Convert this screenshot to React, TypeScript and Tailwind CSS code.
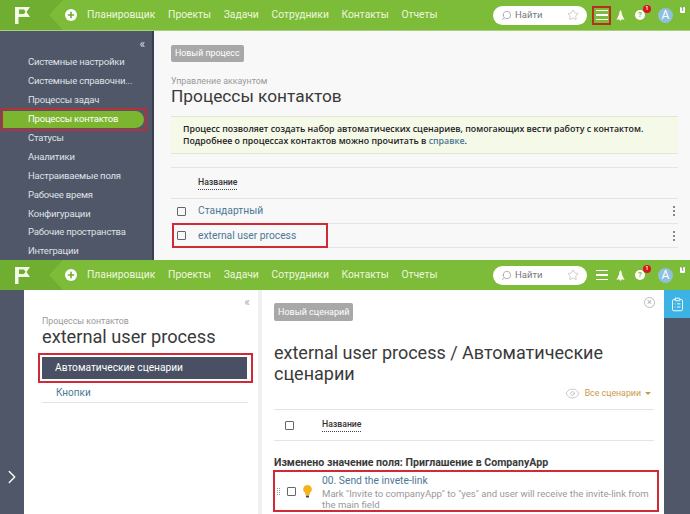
import { ChevronRight, ClipboardList, Eye, Search, Star } from "lucide-react";

const navItems = ["Планировщик", "Проекты", "Задачи", "Сотрудники", "Контакты", "Отчеты"];
const sideItems = [
  "Системные настройки",
  "Системные справочни...",
  "Процессы задач",
  "Процессы контактов",
  "Статусы",
  "Аналитики",
  "Настраиваемые поля",
  "Рабочее время",
  "Конфигурации",
  "Рабочие пространства",
  "Интеграции",
];

function Flag() {
  return (
    <svg width="15" height="17" viewBox="0 0 15 17">
      <path fillRule="evenodd" d="M0 0h15l-3.500 5 3.500 5H3.500v7H0zM4 2.500V7h5l1.500-2.200L9 2.500z" fill="#f4f9ea" />
    </svg>
  );
}

function PlusDisc() {
  return (
    <svg width="12" height="12" viewBox="0 0 12 12">
      <circle cx="6" cy="6" r="6" fill="#fff" />
      <path d="M6 2.800v6.400M2.800 6h6.400" stroke="#6fae31" strokeWidth="1.600" />
    </svg>
  );
}

function Rocket() {
  return (
    <svg width="9" height="11" viewBox="0 0 9 11">
      <path d="M4.500 0c1 1.300 1.400 2.700 1.400 4.300L8.500 10 6 9.200 4.500 11 3 9.200.5 10l2.600-5.700C3.100 2.700 3.500 1.300 4.500 0z" fill="#f4f9ea" />
    </svg>
  );
}

function Header({ marked }: { marked?: boolean }) {
  return (
    <header className="flex h-[30px] shrink-0 items-center bg-[#7cbc38] pr-[17px]">
      <div className="relative flex h-full w-[63px] shrink-0 items-center bg-[#6fae31] pl-[15px]">
        <Flag />
        <div className="absolute right-0 top-0 h-0 w-0 border-y-[15px] border-r-[14px] border-y-transparent border-r-[#7cbc38]" />
      </div>
      <span className="ml-[2px]">
        <PlusDisc />
      </span>
      <nav className="ml-[10px] flex gap-[12.700px] text-[10.300px] text-[#eef7df]">
        {navItems.map((item) => (
          <span key={item}>{item}</span>
        ))}
      </nav>
      <div className="ml-auto flex h-[19px] w-[94px] items-center rounded-full bg-white pl-[8px] pr-[8px] text-[9.500px] text-[#777]">
        <Search size={11} className="-scale-x-100 text-[#aaa]" />
        <span className="ml-[3px]">Найти</span>
        <Star size={12} className="ml-auto text-[#ccc]" />
      </div>
      <div
        className={
          marked
            ? "ml-[5px] flex h-[19px] w-[19px] flex-col items-center justify-center gap-[3px] border-2 border-[#b5301d]"
            : "ml-[5px] flex h-[19px] w-[19px] flex-col items-center justify-center gap-[3px]"
        }
      >
        <span className="h-[1.500px] w-[12px] bg-white" />
        <span className="h-[1.500px] w-[12px] bg-white" />
        <span className="h-[1.500px] w-[12px] bg-white" />
      </div>
      <div className="ml-[5px]">
        <Rocket />
      </div>
      <div className="relative ml-[10px] flex h-[10px] w-[10px] items-center justify-center rounded-full bg-white text-[8px] font-bold text-[#7cbc38]">
        ?
        <span className="absolute -right-[6px] -top-[5px] flex h-[8px] w-[8px] items-center justify-center rounded-full bg-[#d8141c] text-[5px] text-white">
          1
        </span>
      </div>
      <div className="relative ml-[13px] flex h-[15px] w-[15px] items-center justify-center rounded-full bg-[#8fc0de] text-[12px] text-white">
        A
        <span className="absolute -right-[12px] -top-[1px] flex h-[6px] w-[5px] items-center justify-center rounded-[1px] bg-white text-[5px] font-bold text-[#666]">
          1
        </span>
      </div>
    </header>
  );
}

function Checkbox() {
  return <span className="block h-[9px] w-[9px] shrink-0 rounded-[1px] border border-[#666]" />;
}

function Dots() {
  return (
    <span className="ml-auto flex flex-col gap-[2px]">
      <i className="h-[2px] w-[2px] bg-[#888]" />
      <i className="h-[2px] w-[2px] bg-[#888]" />
      <i className="h-[2px] w-[2px] bg-[#888]" />
    </span>
  );
}

function TopScreen() {
  return (
    <section className="flex h-[260px] flex-col overflow-hidden">
      <div className="h-[31px] shrink-0 border-b border-[#a9cf7e] bg-[#7cbc38]">
        <Header marked />
      </div>
      <div className="flex min-h-0 flex-1">
        <aside className="relative w-[154px] shrink-0 border-r-2 border-[#3a3f4d] bg-[#505768] pt-[22px] text-[9.500px] tracking-[-0.2px] text-[#dfe2e7]">
          <span className="absolute right-[7px] top-[7px] text-[12px] leading-[12px] text-[#d8dbe0]">«</span>
          {sideItems.map((item) => (
            <div
              key={item}
              className={
                item === "Процессы контактов"
                  ? "-my-[2px] ml-[1px] w-[146px] border-2 border-[#b5303a] py-px"
                  : "flex h-[18.900px] items-center pl-[28px]"
              }
            >
              {item === "Процессы контактов" ? (
                <div className="flex h-[17px] w-[141px] items-center rounded-r-full bg-[#7cb52f] pl-[25px] text-white">
                  {item}
                </div>
              ) : (
                item
              )}
            </div>
          ))}
        </aside>
        <main className="flex-1 bg-[#f8f8f8] pl-[17px] pr-[12px] pt-[14px]">
          <button className="block h-[17px] rounded-[2px] bg-[#a8a8a8] px-[4px] text-[8.800px] leading-[17px] text-white">
            Новый процесс
          </button>
          <p className="mt-[13px] text-[8.900px] leading-[12px] text-[#999]">Управление аккаунтом</p>
          <h1 className="-mt-[2px] text-[17.300px] leading-[22px] text-[#3a3a3a]">Процессы контактов</h1>
          <div className="mt-[9px] h-[38px] border-b border-t border-[#e2e8cf] bg-[#f5f9e8] px-[12px] pt-[6px] font-['Open_Sans',sans-serif] text-[8.800px] font-semibold leading-[12px] text-[#222]">
            <p>Процесс позволяет создать набор автоматических сценариев, помогающих вести работу с контактом.</p>
            <p>
              Подробнее о процессах контактов можно прочитать в <span className="text-[#4c7795]">справке</span>.
            </p>
          </div>
          <div className="mt-[13px] flex h-[32px] items-center border-b border-t border-[#e4e4e4] pl-[27px] text-[8.700px] font-medium text-[#333]">
            <span className="border-b border-dotted border-[#444]">Название</span>
          </div>
          <div className="flex h-[25px] items-center gap-[12px] border-b border-[#e4e4e4] pl-[6px] pr-[3px] text-[10.300px] text-[#4c7795]">
            <Checkbox />
            Стандартный
            <Dots />
          </div>
          <div className="relative flex h-[24px] items-center gap-[12px] border-b border-[#e4e4e4] pl-[6px] pr-[3px] text-[10.300px] text-[#4c7795]">
            <div className="absolute -top-px left-[1px] h-[25px] w-[156px] border-2 border-[#cf2a35]" />
            <Checkbox />
            external user process
            <Dots />
          </div>
        </main>
      </div>
    </section>
  );
}

function BottomScreen() {
  return (
    <section className="flex h-[254px] flex-col overflow-hidden">
      <Header />
      <div className="flex min-h-0 flex-1 bg-[#f0f0f0]">
        <div className="flex w-[24px] shrink-0 items-end justify-center bg-[#505768] pb-[26px]">
          <ChevronRight size={22} strokeWidth={1.500} className="text-white" />
        </div>
        <aside className="relative w-[234px] shrink-0 bg-white pl-[14px] pt-[25px]">
          <span className="absolute right-[8px] top-[6px] text-[12px] leading-[12px] text-[#aaa]">«</span>
          <div className="pl-[4px]">
            <p className="text-[8.800px] leading-[12px] text-[#999]">Процессы контактов</p>
            <h2 className="text-[18.200px] leading-[20px] text-[#3a3a3a]">external user process</h2>
          </div>
          <div className="mt-[6px] w-[215px] border-2 border-[#cf2a35] py-[2px] pl-[2px] pr-[4px]">
            <div className="flex h-[22px] items-center bg-[#4a5064] pl-[13px] text-[10.200px] text-white">
              Автоматические сценарии
            </div>
          </div>
          <div className="ml-[4px] flex h-[20px] w-[206px] items-center border-b border-[#e4e4e4] pl-[14px] text-[10px] text-[#4c7795]">
            Кнопки
          </div>
        </aside>
        <main className="relative ml-[4px] w-[402px] shrink-0 bg-white pl-[12px] pr-[10px] pt-[13px]">
          <div className="absolute right-[9px] top-[7px] flex h-[11px] w-[11px] items-center justify-center rounded-full border border-[#bbb] text-[9px] leading-none text-[#aaa]">
            ×
          </div>
          <button className="block h-[18px] rounded-[2px] bg-[#a8a8a8] px-[4px] text-[9px] leading-[18px] text-white">
            Новый сценарий
          </button>
          <h1 className="mt-[21px] text-[18px] leading-[21px] text-[#3a3a3a]">
            external user process / Автоматические сценарии
          </h1>
          <div className="mt-[1px] flex h-[17px] items-center justify-end gap-[5px] pr-[3px] text-[8.800px] text-[#c99a4a]">
            <Eye size={15} strokeWidth={1} className="text-[#aaa]" />
            <span>Все сценарии</span>
            <span className="-ml-px h-0 w-0 border-x-[3px] border-t-[3px] border-x-transparent border-t-[#c99a4a]" />
          </div>
          <div className="mt-[7px] flex h-[32px] items-center border-b border-t border-[#e4e4e4] pl-[11px] text-[8.700px] font-medium text-[#333]">
            <Checkbox />
            <span className="ml-[28px] border-b border-dotted border-[#444]">Название</span>
          </div>
          <p className="mt-[14px] text-[10.600px] font-bold leading-[15px] text-[#3a3a3a]">
            Изменено значение поля: Приглашение в CompanyApp
          </p>
          <div className="-ml-px -mr-[5px] flex h-[42px] items-center border-2 border-[#cf2a35] pl-[2px]">
            <span className="grid grid-cols-2 gap-[1px]">
              {[0, 1, 2, 3, 4, 5, 6, 7].map((d) => (
                <i key={d} className="h-px w-px bg-[#999]" />
              ))}
            </span>
            <span className="ml-[7px]">
              <Checkbox />
            </span>
            <svg className="ml-[7px] shrink-0" width="9" height="13" viewBox="0 0 9 13">
              <path d="M4.500 0a4.300 4.300 0 0 1 2.500 7.800L6.500 10h-4L2 7.800A4.300 4.300 0 0 1 4.500 0z" fill="#f5b21c" />
              <rect x="3" y="10.500" width="3" height="2" fill="#444" />
            </svg>
            <div className="ml-[10px] min-w-0 flex-1 pr-[1px] pt-[2px]">
              <p className="text-[10.300px] leading-[14px] text-[#4c7795]">00. Send the invete-link</p>
              <p className="text-[9.600px] leading-[11px] text-[#999]">
                Mark "Invite to companyApp" to "yes" and user will receive the invite-link from the main field
              </p>
            </div>
          </div>
        </main>
        <div className="flex-1 bg-[#505768]">
          <div className="flex h-[28px] items-center justify-center bg-[#3db2e4]">
            <ClipboardList size={15} strokeWidth={1.500} className="text-white" />
          </div>
        </div>
      </div>
    </section>
  );
}

export default function App() {
  return (
    <div className="h-[514px] w-[690px] overflow-hidden bg-[#f8f8f8] font-['Roboto','Noto_Sans',sans-serif]">
      <TopScreen />
      <BottomScreen />
    </div>
  );
}
